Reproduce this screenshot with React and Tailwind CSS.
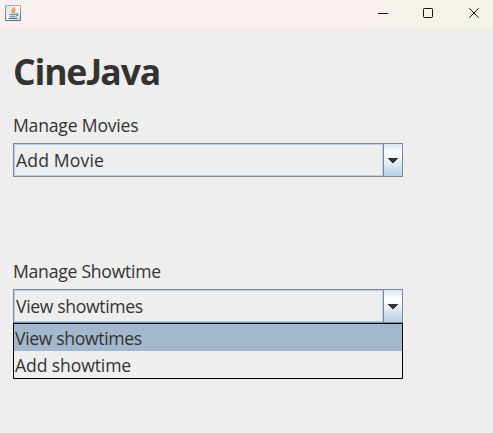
import React from "react";

function JavaIcon() {
  return (
    <svg width="16" height="16" viewBox="0 0 16 16" className="shrink-0">
      <defs>
        <linearGradient id="frame" x1="0" y1="0" x2="0" y2="1">
          <stop offset="0" stopColor="#9fb0bd" />
          <stop offset="1" stopColor="#46708f" />
        </linearGradient>
        <linearGradient id="face" x1="0" y1="0" x2="1" y2="1">
          <stop offset="0" stopColor="#d3dce2" />
          <stop offset="0.5" stopColor="#ffffff" />
          <stop offset="1" stopColor="#cfdae2" />
        </linearGradient>
      </defs>
      <rect width="16" height="16" rx="1" fill="url(#frame)" />
      <rect x="1" y="1" width="14" height="14" fill="url(#face)" />
      <path d="M9.4 2.2C9.8 4 6.4 4.6 7 6.3c.2.6.7 1 .9 1.7M10.7 4.6C9 5.2 8.7 6 9.2 6.8c.2.4.1.8-.3 1.2" fill="none" stroke="#e8862e" strokeWidth="1.4" />
      <path d="M4.2 9.3h6.8M4.8 11.2h5.6M11 9c2.4-.7 2.4 1.6.2 2M3.4 13.4h8.8" fill="none" stroke="#4a7496" strokeWidth="1.1" />
    </svg>
  );
}

function TitleBar() {
  return (
    <header className="flex h-[29px] items-start bg-linear-to-r from-[#f9efec] from-70% to-[#f5f2ea] to-85% pt-[5px] pl-[5px]">
      <JavaIcon />
      <svg width="102" height="16" viewBox="0 0 102 16" className="mr-[13px] ml-auto" fill="none" stroke="#111" strokeWidth="1">
        <path d="M0 8.5h10" />
        <rect x="45.5" y="3.5" width="9" height="9" rx="0.8" />
        <path d="M91.3 3.3l9.4 9.4M100.7 3.3l-9.4 9.4" />
      </svg>
    </header>
  );
}

function ComboBox({ children }) {
  return (
    <div className="flex h-[34px] w-[390px] border border-[#7a8a99]">
      <div className="flex flex-1 items-center border border-[#b8cfe5] pl-px">{children}</div>
      <div className="flex w-[19px] items-center justify-center border-l border-[#7a8a99] bg-linear-to-b from-[#dde8f3] via-white via-30% to-[#b8cfe5]">
        <svg width="10" height="5" viewBox="0 0 10 5" fill="#333" shapeRendering="crispEdges" className="mt-px">
          <path d="M0 0h10v1H9v1H8v1H7v1H6v1H4V4H3V3H2V2H1V1H0z" />
        </svg>
      </div>
    </div>
  );
}

export default function App() {
  return (
    <div className="h-[433px] w-[493px] overflow-hidden bg-[#eeeeee] font-['Open_Sans','Noto_Sans',sans-serif] text-[17.6px] leading-6 whitespace-nowrap text-[#333333]">
      <TitleBar />
      <main className="flex flex-col pt-[18px] pl-[13px]">
        <h1 className="h-12 text-[35.5px] leading-[48px] font-bold tracking-[-1.15px]">
          Cine<span className="font-['Lato'] font-black">J</span>ava
        </h1>
        <section className="mt-[18px]">
          <div className="mb-[6px] h-6 tracking-[-0.2px]">Manage Movies</div>
          <ComboBox><span className="tracking-[0.15px]">Add Movie</span></ComboBox>
        </section>
        <section className="mt-[82px]">
          <div className="mb-[6px] h-6 tracking-[-0.25px]">Manage Showtime</div>
          <ComboBox><span className="tracking-[-0.35px]">View showtimes</span></ComboBox>
          <ul className="h-14 w-[390px] border border-black leading-[29px]">
            <li className="h-[27px] bg-[#a3b8cc] pl-px tracking-[-0.35px]">View showtimes</li>
            <li className="h-[27px] pl-px tracking-[-0.12px]">Add showtime</li>
          </ul>
        </section>
      </main>
    </div>
  );
}
